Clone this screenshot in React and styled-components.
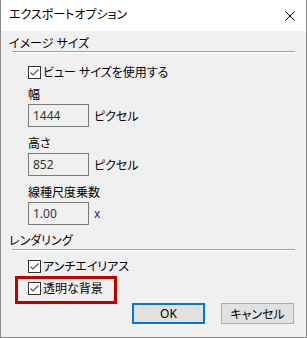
import styled, { createGlobalStyle } from "styled-components";

const GlobalStyle = createGlobalStyle`
    body {
        margin: 0;
        background: #ffffff;
    }
`

const Window = styled.div`
    width: 307px;
    height: 338px;
    box-sizing: border-box;
    border: 1px solid #8a8a8a;
    border-top: none;
    display: flex;
    flex-direction: column;
    font-family: "Noto Sans", "Noto Sans CJK JP", sans-serif;
    font-feature-settings: "palt";
    font-size: 12px;
    color: #000;
`

const TitleBar = styled.div`
    height: 31px;
    flex-shrink: 0;
    background: #ffffff;
    display: flex;
    align-items: center;
    justify-content: space-between;
    padding: 0 11px 0 8px;
`

const Title = styled.span`
    line-height: 1;
    margin-top: -1px;
`

const Body = styled.div`
    flex: 1;
    background: #f0f0f0;
    padding: 0 11px 0 8px;
    display: flex;
    flex-direction: column;
`

const SectionTitle = styled.div`
    margin-top: ${p => p.$top}px;
    line-height: ${p => p.$lh || 15}px;
`

const Rule = styled.div`
    margin-left: 3px;
    border-top: 1px solid #a0a0a0;
    border-bottom: 1px solid #ffffff;
`

const Group = styled.div`
    padding-left: 19px;
    display: flex;
    flex-direction: column;
    align-items: flex-start;
`

const CheckRow = styled.label`
    display: flex;
    align-items: center;
    gap: 2px;
    height: 16px;
    margin-top: ${p => p.$top}px;
    position: relative;
    white-space: nowrap;
`

// red annotation frame drawn over the row
const Highlight = styled(CheckRow)`
    &::after {
        content: "";
        position: absolute;
        top: -4px;
        left: -13px;
        width: 102px;
        height: 28px;
        box-sizing: border-box;
        border: 3px solid #c00000;
        pointer-events: none;
    }
`

const Box = styled.span`
    width: 13px;
    height: 13px;
    box-sizing: border-box;
    border: 1px solid #333333;
    background: #ffffff;
    display: flex;
    align-items: center;
    justify-content: center;
`

const FieldLabel = styled.div`
    line-height: 16px;
    margin-top: ${p => p.$top}px;
`

const InputRow = styled.div`
    display: flex;
    align-items: center;
    gap: 5px;
    margin-top: 1px;
`

const TextBox = styled.div`
    width: 61px;
    height: 23px;
    box-sizing: border-box;
    border: 1px solid #7a7a7a;
    background: #f0f0f0;
    padding-left: 4px;
    display: flex;
    align-items: center;
    font-size: 12px;
    color: #333333;
`

const Unit = styled.span`
    color: ${p => p.$color || "#000"};
`

const ButtonRow = styled.div`
    display: flex;
    justify-content: flex-end;
    gap: 16px;
    margin-top: 7px;
    padding-right: 1px;
`

const Button = styled.button`
    width: 73px;
    height: 21px;
    box-sizing: border-box;
    background: #e1e1e1;
    border: ${p => p.$primary ? "2px solid #0078d7" : "1px solid #adadad"};
    font-family: inherit;
    font-feature-settings: "palt";
    font-size: 12px;
    color: #000;
    padding: 0;
    display: flex;
    align-items: center;
    justify-content: center;
`

function Check(){
    return(
        <Box>
            <svg width="11" height="11" viewBox="0 0 11 11">
                <polyline points="1.5,5.5 4,8 9.5,2.5" fill="none" stroke="#555" strokeWidth="1.2"/>
            </svg>
        </Box>
    )
}

function App(){
    return(
        <>
            <GlobalStyle/>
            <Window>
                <TitleBar>
                    <Title>エクスポートオプション</Title>
                    <svg width="10" height="10" viewBox="0 0 10 10">
                        <path d="M0.5 0.5 L9.5 9.5 M9.5 0.5 L0.5 9.5" stroke="#000" strokeWidth="1"/>
                    </svg>
                </TitleBar>
                <Body>
                    <SectionTitle $top={5}>イメージ サイズ</SectionTitle>
                    <Rule/>
                    <Group>
                        <CheckRow $top={11}><Check/>ビュー サイズを使用する</CheckRow>
                        <FieldLabel $top={7}>幅</FieldLabel>
                        <InputRow>
                            <TextBox>1444</TextBox>
                            <Unit>ピクセル</Unit>
                        </InputRow>
                        <FieldLabel $top={9}>高さ</FieldLabel>
                        <InputRow>
                            <TextBox>852</TextBox>
                            <Unit>ピクセル</Unit>
                        </InputRow>
                        <FieldLabel $top={9}>線種尺度乗数</FieldLabel>
                        <InputRow>
                            <TextBox>1.00</TextBox>
                            <Unit $color="#1c2a6e">x</Unit>
                        </InputRow>
                    </Group>
                    <SectionTitle $top={8} $lh={16}>レンダリング</SectionTitle>
                    <Rule/>
                    <Group>
                        <CheckRow $top={7}><Check/>アンチエイリアス</CheckRow>
                        <Highlight $top={6}><Check/>透明な背景</Highlight>
                    </Group>
                    <ButtonRow>
                        <Button $primary>OK</Button>
                        <Button>キャンセル</Button>
                    </ButtonRow>
                </Body>
            </Window>
        </>
    )
}

export default App;
